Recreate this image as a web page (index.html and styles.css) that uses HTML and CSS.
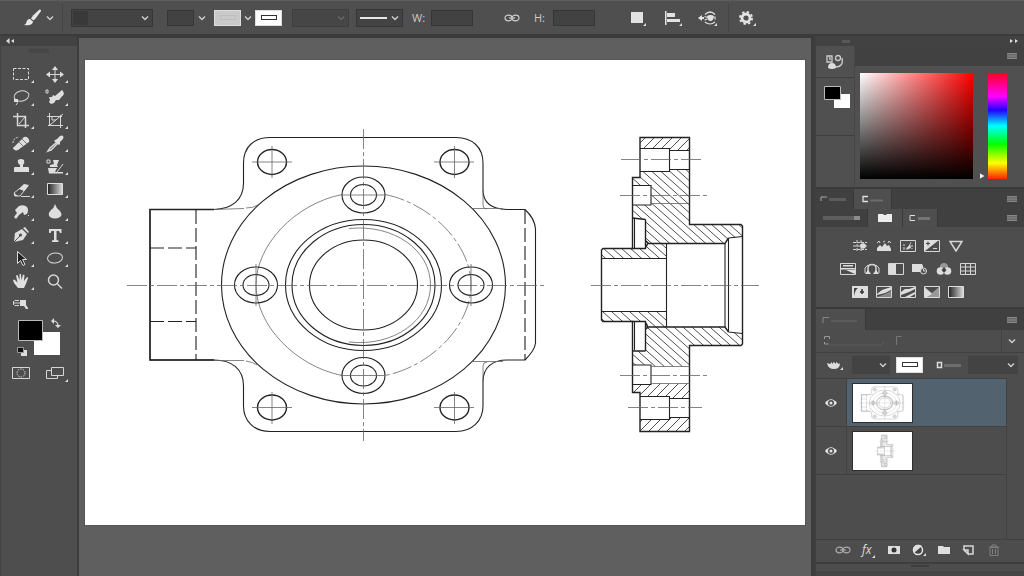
FILE: index.html
```html
<!DOCTYPE html>
<html lang="en">
<head>
    <meta charset="UTF-8">
    <meta name="viewport" content="width=device-width, initial-scale=1">
    <title>Image Editor</title>
    <link rel="stylesheet" href="styles.css">
</head>
<body>
    <!-- shared symbols -->
    <svg class="defs" width="0" height="0" aria-hidden="true">
        <symbol id="chev" viewBox="0 0 10 8"><path d="M2 2.500l3 3 3-3" fill="none" stroke="currentColor" stroke-width="1.500"/></symbol>
        <symbol id="menu" viewBox="0 0 10 8"><path d="M0 1h10v6H0z" fill="#686868"/><path d="M0 1.500h10M0 4h10M0 6.500h10" stroke="currentColor"/></symbol>
        <symbol id="link" viewBox="0 0 16 8"><g fill="none" stroke="currentColor" stroke-width="1.200"><ellipse cx="4.500" cy="4" rx="3.500" ry="2.800"/><ellipse cx="11.500" cy="4" rx="3.500" ry="2.800"/><path d="M5 4h6"/></g></symbol>
        <symbol id="eye" viewBox="0 0 14 10"><path d="M1 5q6-7.500 12 0-6 7.500-12 0z" fill="#e4e4e4"/><circle cx="7" cy="5" r="3" fill="#4b4b4b"/><circle cx="7" cy="5" r="1.500" fill="#e4e4e4"/></symbol>
        <pattern id="hatch-back" width="9" height="8" patternUnits="userSpaceOnUse"><path d="M-9-8l27 24M-9 0l18 16M0-8l18 16" stroke="#222" stroke-width=".8"/></pattern>
        <pattern id="hatch-fwd" width="9" height="9" patternUnits="userSpaceOnUse"><path d="M-3 12L12-3M-3 3l6-6M6 12l6-6" stroke="#222" stroke-width=".8"/></pattern>
    </svg>

    <header class="options">
        <div class="group">
            <button class="icon" aria-label="Brush tool">
                <svg width="20" height="20" viewBox="0 0 20 20"><path d="M19 2l-1.500-.5L11 7.500 9 10.500l2.500 2L14 10l5-7z" fill="#e6e6e6"/><path d="M8 11l3 2.500c0 3-4 4.500-9 3.500 3-1 2-3.500 3.500-5 .8-.8 1.600-1 2.500-1z" fill="#e6e6e6"/></svg>
            </button>
            <button class="icon" aria-label="Brush presets"><svg class="chev"><use href="#chev"/></svg></button>
        </div>
        <i class="sep"></i>
        <div class="drop drop--mode">
            <select aria-label="Mode"><option></option></select>
            <i class="drop__chip"></i>
            <svg class="chev"><use href="#chev"/></svg>
        </div>
        <div class="group group--fill">
            <button class="well" aria-label="Fill"></button>
            <svg class="chev"><use href="#chev"/></svg>
        </div>
        <div class="group group--stroke">
            <button class="well well--grey" aria-label="Stroke colour"><i></i></button>
            <svg class="chev"><use href="#chev"/></svg>
            <button class="well well--white" aria-label="Stroke style"><i></i></button>
        </div>
        <div class="drop drop--off">
            <select aria-label="Stroke width" disabled><option></option></select>
            <svg class="chev"><use href="#chev"/></svg>
        </div>
        <div class="drop drop--line">
            <select aria-label="Line type"><option></option></select>
            <i class="drop__line"></i>
            <svg class="chev"><use href="#chev"/></svg>
        </div>
        <div class="group group--size group--w">
            <label for="w">W:</label><input id="w" type="text">
        </div>
        <button class="icon link-wh" aria-label="Link width and height"><svg width="16" height="8"><use href="#link"/></svg></button>
        <div class="group group--size">
            <label for="h">H:</label><input id="h" type="text">
        </div>
        <div class="group group--actions">
            <button class="icon" aria-label="Path operations">
                <svg width="20" height="18" viewBox="0 0 20 18"><path d="M3 3h12v11H3zM18 14v3h-3z" fill="#e2e2e2"/></svg>
            </button>
            <button class="icon" aria-label="Path alignment">
                <svg width="20" height="18" viewBox="0 0 20 18"><path d="M2 2h1.500v14H2zM4 4h8v4H4zM4 10h13v3H4zM19 14v3h-3z" fill="#e2e2e2"/></svg>
            </button>
            <button class="icon" aria-label="Path arrangement">
                <svg width="20" height="18" viewBox="0 0 20 18"><g fill="none" stroke="#e2e2e2" stroke-width="1.200"><path d="M7 5.500q5-5 10 0M7 13q5 4 10 0M6.500 7.500l3 1M6.500 11l3-1M17 7.500v3"/></g><path d="M9 7q3.500-2 7 0-.5 5-3.500 5T9 7zM0 9l4-3v2h2v2H4v2zM19 14v3h-3z" fill="#e2e2e2"/></svg>
            </button>
        </div>
        <i class="sep"></i>
        <button class="icon" aria-label="Settings">
            <svg width="20" height="18" viewBox="0 0 20 18"><circle cx="9" cy="9" r="4" fill="none" stroke="#e2e2e2" stroke-width="2.800"/><circle cx="9" cy="9" r="6" fill="none" stroke="#e2e2e2" stroke-width="2" stroke-dasharray="2.400 2.312"/><path d="M19 14v3h-3z" fill="#e2e2e2"/></svg>
        </button>
    </header>

    <main class="workspace">
        <aside class="tools">
            <div class="tools__head"><svg width="8" height="6" viewBox="0 0 8 6"><path d="M3.500 0v6L0 3zM8 1v4L5 3z" fill="#ddd"/></svg></div>
            <div class="tools__grip"></div>
            <div class="tools__grid">
                <button aria-label="Marquee"><svg viewBox="0 0 34 23"><path d="M9.500 5.500h15v11h-15z" class="ln" stroke-dasharray="3 1.500"/><path class="corner" d="M30 17v3h-3z"/></svg></button>
                <button aria-label="Move"><svg viewBox="0 0 34 23"><path d="M17 5v13M10 11.500h14" class="ln"/><path class="fl" d="M17 3l3 4h-6zM17 20l3-4h-6zM8 11.500l4-3v6zM26 11.500l-4-3v6z"/><path class="corner" d="M30 17v3h-3z"/></svg></button>

                <button aria-label="Lasso"><svg viewBox="0 0 34 23"><ellipse cx="17.500" cy="10" rx="7.500" ry="5" transform="rotate(-12 17.500 10)" class="ln"/><path class="ln" d="M11 12.500q-2 2 1 2.500t0 4"/><path class="fl" d="M10 13h4v3h-4z"/><path class="corner" d="M30 17v3h-3z"/></svg></button>
                <button aria-label="Quick selection"><svg viewBox="0 0 34 23"><path class="fl" d="M25 5l-1-1-7 6-2-1-1 2-3 0 1 3-1 2 2 2 3-1 2-3 3 0 5-6z"/><path class="ln" d="M8 4h2v3H8zM24 9l1 1"/><path class="corner" d="M30 17v3h-3z"/></svg></button>

                <button aria-label="Crop"><svg viewBox="0 0 34 23"><path class="ln ln--b" d="M13.500 4v12.500H25M9 7.500h12.500V19"/><path class="ln" d="M15 15l6-7"/><path class="corner" d="M30 17v3h-3z"/></svg></button>
                <button aria-label="Slice"><svg viewBox="0 0 34 23"><path class="ln" d="M11.500 4v13M9 7.500h15M22.500 6v13M10 16.500h15M12 16L25 5M14 8v3h4"/><path class="corner" d="M30 17v3h-3z"/></svg></button>

                <button aria-label="Healing brush"><svg viewBox="0 0 34 23"><path class="fl" d="M10 15L20 5q2-1 4 1t1 4l-11 8q-2 1-4-0.500t0-2.500z"/><path d="M15 10l5 5M18 7l5 5" stroke="#4e4e4e" stroke-width=".7"/><path class="ln" d="M9 11q0-5 6-6" stroke-dasharray="2 1"/><path class="corner" d="M30 17v3h-3z"/></svg></button>
                <button aria-label="Eyedropper"><svg viewBox="0 0 34 23"><path class="ln ln--b" d="M19 10l-7 6-2 3 3-1 7-7"/><path class="fl" d="M17 8l2-1 3-3q2-1 3 0t0 3l-3 3 0 2-1 1-5-4z"/><path class="corner" d="M30 17v3h-3z"/></svg></button>

                <button aria-label="Clone stamp"><svg viewBox="0 0 34 23"><path class="fl" d="M14 5q3-2 6 0 1 3-1 5v2h5q1 0 1 1v4H10v-4q0-1 1-1h5v-2q-3-2-2-5z"/><path class="corner" d="M30 17v3h-3z"/></svg></button>
                <button aria-label="History brush"><svg viewBox="0 0 34 23"><path class="fl" d="M15 5h6l-2 5 1 2h-8v-2l4-1zM10 13h9l-2 4h8v1.500H11z"/><path class="ln" d="M9 5h3v3H9zM25 9l-6 8"/><path class="corner" d="M30 17v3h-3z"/></svg></button>

                <button aria-label="Eraser"><svg viewBox="0 0 34 23"><path class="ln" d="M10 15l10-8 4 1-8 10h-5zM17 18.500h9"/><path class="fl" d="M15 11l5-5 5 1-5 6zM10 15l4 3h-4z"/><path class="corner" d="M30 17v3h-3z"/></svg></button>
                <button aria-label="Gradient"><svg viewBox="0 0 34 23"><defs><linearGradient id="bw"><stop stop-color="#222"/><stop offset="1" stop-color="#ddd"/></linearGradient></defs><path d="M9.500 5.500h15v11h-15z" fill="url(#bw)" stroke="#ddd"/><path class="corner" d="M30 17v3h-3z"/></svg></button>

                <button aria-label="Smudge"><svg viewBox="0 0 34 23"><path class="fl" d="M10 16l3-4-2-3 4-4q5-2 8 1 2 3 0 7l-3 1-1-3-4 3-3 4z"/><path class="ln" d="M24 14l1 1"/><path class="corner" d="M30 17v3h-3z"/></svg></button>
                <button aria-label="Blur"><svg viewBox="0 0 34 23"><path class="fl" d="M17 3q1 4 5 7 3 4 0 6-5 3-10 0-3-3 1-7 3-2 4-6z"/><path class="corner" d="M30 17v3h-3z"/></svg></button>

                <button aria-label="Pen"><svg viewBox="0 0 34 23"><path class="fl" d="M10 18l1-9 7-4 5 5-4 6zM19 4l2-1 4 5-1 1z"/><path d="M10 18l6-6" stroke="#4e4e4e"/><circle cx="16.500" cy="11" r="1.600" fill="#4e4e4e"/><path class="corner" d="M30 17v3h-3z"/></svg></button>
                <button aria-label="Type"><svg viewBox="0 0 34 23"><path class="fl" d="M11 5h12.500v4H22l-1-2h-2.500v9l2 .5V18h-6.500v-1.500l2-.5V7h-2.500l-1 2H11z"/><path class="corner" d="M30 17v3h-3z"/></svg></button>

                <button aria-label="Path selection"><svg viewBox="0 0 34 23"><path d="M13.500 4.500v12l3-3 2.500 5 2-1-2.500-5h4z" fill="#222" stroke="#ddd"/><path class="corner" d="M30 17v3h-3z"/></svg></button>
                <button aria-label="Ellipse"><svg viewBox="0 0 34 23"><ellipse cx="17" cy="11" rx="7.500" ry="5" class="ln" transform="rotate(-8 17 11)"/><path class="corner" d="M30 17v3h-3z"/></svg></button>

                <button aria-label="Hand"><svg viewBox="0 0 34 23"><path class="fl" d="M14 18l-4-5-1-3 1.500-.5 3 3-1.500-7 1.500-.5 2 5V4H17l.5 6 1.500-5.500 1.500.5-.5 6 3-4 1.200.8-2.200 6L20 18z"/><path class="corner" d="M30 17v3h-3z"/></svg></button>
                <button aria-label="Zoom"><svg viewBox="0 0 34 23"><circle cx="15.500" cy="10" r="5" class="ln ln--b"/><path class="ln ln--b" d="M19 13.500l5 5"/></svg></button>

                <button aria-label="More tools"><svg viewBox="0 0 34 23"><path class="fl" d="M16 7h6v5l2 3v1h-2l-2-3-4 0z"/><path class="ln" d="M10.500 7.500H15M10.500 12.500H15M9.500 8v4M10 10h7"/></svg></button>
            </div>
            <button class="tools__colors" aria-label="Foreground and background colours">
                <svg width="56" height="44" viewBox="0 0 56 44"><path d="M22 16h26v23H22z" fill="#fff"/><path d="M6.500 4.500h24v20h-24z" fill="#000" stroke="#bbb"/><path d="M9 34h6v6H9z" fill="#ddd"/><path d="M5.500 31.500h6v5h-6z" fill="#111" stroke="#999"/><path d="M41 5q5 0 5 5" fill="none" stroke="#ddd" stroke-width="1.200"/><path d="M39 5l3-3v6zM46 12l-3-3h6z" fill="#ddd"/></svg>
            </button>
            <div class="tools__modes">
                <button aria-label="Quick mask"><svg viewBox="0 0 34 23"><path class="ln" d="M8.500 5.500h17v11h-17z"/><circle cx="17" cy="11" r="4" class="ln" stroke-dasharray="1.500 1"/></svg></button>
                <button aria-label="Screen mode"><svg viewBox="0 0 34 23"><path class="ln" d="M13.500 5.500h12v8h-12zM13 8.500H8.500v8h11V14"/><path class="corner" d="M30 17v3h-3z"/></svg></button>
            </div>
        </aside>

        <section class="canvas">
            <svg class="paper" viewBox="85 60 720 465" role="img" aria-label="Flange drawing, front view and section">
                <g id="front" class="draw">
                    <path d="M150 209.500H214C232 209 243.500 200 243.500 183V163C243.500 147 254 137.500 270 137.500H456C472 137.500 483 147 483 163V190C483 203 492 209 507 209.500H525C531 215 535 222 535.500 229V343C535 349 531 354 525 360H507C492 360 483 368 483 381V406C483 421 472 431.500 456 431.500H270C254 431.500 243.500 421 243.500 406V386C243.500 369 232 360 214 360H150z"/>
                    <path class="edge" d="M214 209.500H150V360H214"/>
                    <path class="dash" d="M196 210v150M150 248h46M150 321.500h46M525 210v150"/>
                    <path class="thin" d="M214 209.500l30-1M246 208q7 0 12-3M473 208.500h30M473 361.500h30M214 360.500h30M246 361q7 1 11 4M483 190v15q0 4 4 4M483 381v-15q0-4 4-4"/>
                    <ellipse cx="363.500" cy="285" rx="142" ry="119"/>
                    <path class="thin" d="M342 194.500C295 204 256 245 256 285C256 325 295 366 342 375.500"/>
                    <path class="thin axis" d="M385 194.500C432 204 471 245 471 285C471 325 432 366 385 375.500"/>
                    <ellipse cx="363.500" cy="285" rx="78" ry="65.500"/>
                    <ellipse cx="363.500" cy="285" rx="71.500" ry="60.500"/>
                    <path class="thin" d="M349 228.500C394 224 430.500 250 430.500 285S394 347 349 342"/>
                    <ellipse cx="363.500" cy="285" rx="54" ry="45"/>
                    <g>
                        <ellipse cx="363.500" cy="195" rx="21.500" ry="18"/><ellipse cx="363.500" cy="195" rx="13" ry="10.500"/>
                        <ellipse cx="363.500" cy="375.500" rx="21.500" ry="18"/><ellipse cx="363.500" cy="375.500" rx="13" ry="10.500"/>
                        <ellipse cx="256" cy="285" rx="21.500" ry="18"/><ellipse cx="256" cy="285" rx="13" ry="10.500"/>
                        <ellipse cx="471" cy="285" rx="21.500" ry="18"/><ellipse cx="471" cy="285" rx="13" ry="10.500"/>
                    </g>
                    <g class="bold">
                        <ellipse cx="272" cy="162" rx="14.500" ry="12.500"/>
                        <ellipse cx="454.500" cy="162" rx="14.500" ry="12.500"/>
                        <ellipse cx="272" cy="407.500" rx="14.500" ry="12.500"/>
                        <ellipse cx="454.500" cy="407.500" rx="14.500" ry="12.500"/>
                    </g>
                    <path class="thin" d="M252 162h40M272 146v32M434 162h40M454.500 146v32M252 407.500h40M272 392v32M434 407.500h40M454.500 392v32M342 195h43M342 375.500h43M256 264v42M471 264v42"/>
                    <path class="thin axis" d="M127 285.500H545M363.500 129V441"/>
                </g>
                <g id="side" class="draw">
                    <path class="hatch" fill="url(#hatch-fwd)" d="M640 137.500H689.500V150.500H669.500V148.500H640zM632.500 384.500H651V383.500H689.500V398.500H669.500V396.500H640V392.500H632.500zM640 419.500H669.500V417.500H689.500V431.500H640z"/>
                    <path class="hatch" fill="url(#hatch-back)" d="M640 171.500H669.500V169.500H689.500V224.500H742.500V236.500L728 238L725 243.500H666.500V258.500H601.500V248.500H645.500V219.500L632.500 217.500V205H651V185.500H632.500V177.500H640zM601.500 311.500H666.500V327H725L728 332L742.500 333.500V345.500H689.500V366.500H651V365H632.500V351H645.500V321.500H601.500z"/>
                    <path class="bold" d="M640 137.500H689.500V224.500H741L742.500 226V344L741 345.500H689.500V431.500H640V392.500H632.500V321.500H603L601.500 320V250L603 248.500H632.500V177.500H640z"/>
                    <path d="M640 148.500H669.500V171.500H640M669.500 150.500H689.500M669.500 169.500H689.500M632.500 185.500H651V205H632.500M632.500 365H651V384.500H632.500M640 396.500H669.500V419.500H640M669.500 398.500H689.500M669.500 417.500H689.500"/>
                    <path class="bold" d="M648 243.500H725L728.500 238M648 327H725L728.500 332M645.500 219.500V248.500H632M645.500 351V321.500H632M632.500 218L645.500 219.500M632.500 351H645.500M646 241l2 2-2 4M646 329l2-2-2-4"/>
                    <path d="M634.500 219V248M634.500 322V350M666.500 243.500V327M725 243.500V327M728.500 238V332M728.500 238L742.500 236.500M728.500 332L742.500 333.500M601.500 258.500H666.500M601.500 311.500H666.500"/>
                    <path class="thin" d="M651 203.500H689.500M651 366.500H689.500M651 383.500H689.500"/>
                    <path class="thin axis" d="M621 159.500H704M620 195.500H708M620 375.500H708M628 407.500H702M591 285.500H759"/>
                </g>
            </svg>
        </section>

        <aside class="panels">
            <div class="strip"><i></i><svg width="8" height="6" viewBox="0 0 8 6"><path d="M0 1v4l3-2zM5 1v4l3-2z" fill="#ddd"/></svg></div>

            <section class="color">
                <div class="color__side">
                    <button class="color__tab" aria-label="History">
                        <svg width="20" height="18" viewBox="0 0 20 18"><g fill="none" stroke="#ccc" stroke-width="1.300"><path d="M2 3h5v6H2zM4 5h1v2"/><circle cx="13" cy="5" r="2.500"/><path d="M17 5q2 9-7 9"/></g><path d="M3 15q0-5 4-5t4 5q-4 2-8 0z" fill="#ddd"/></svg>
                    </button>
                    <button class="color__wells" aria-label="Colour swatches">
                        <svg width="28" height="24" viewBox="0 0 28 24"><path d="M11 9h16v14H11z" fill="#fff"/><path d="M1.500 1.500h16v13h-16z" fill="#000" stroke="#bbb"/></svg>
                    </button>
                </div>
                <div class="color__main">
                    <div class="color__head"><svg class="menu"><use href="#menu"/></svg></div>
                    <div class="color__pick">
                        <div class="field"></div>
                        <input class="hue" type="range" min="0" max="360" value="0" aria-label="Hue">
                    </div>
                </div>
            </section>

            <div class="tabs tabs--top">
                <button aria-label="Properties"><svg width="30" height="8" viewBox="0 0 30 8"><path d="M1 6V2h6" fill="none" stroke="#aaa"/><path d="M9 4.500h17" stroke="#5c5c5c" stroke-width="3"/></svg></button>
                <button class="active" aria-label="Character"><svg width="24" height="8" viewBox="0 0 24 8"><path d="M7 1.500H2v5h5" fill="none" stroke="#e0e0e0" stroke-width="1.300"/><path d="M9 5.500h13" stroke="#6c6c6c" stroke-width="2"/></svg></button>
                <svg class="menu"><use href="#menu"/></svg>
            </div>
            <div class="tabs tabs--low">
                <button class="wide" aria-label="Libraries"><svg width="38" height="8" viewBox="0 0 38 8"><path d="M0 4h31" stroke="#5d5d5d" stroke-width="4"/><path d="M31 4h6" stroke="#8b8b8b" stroke-width="4"/></svg></button>
                <button class="active" aria-label="Adjustments"><svg width="16" height="10" viewBox="0 0 16 10"><path d="M1 1h5l1 1h2l1-1h5v8H1z" fill="#ededed"/></svg></button>
                <button class="active" aria-label="Styles"><svg width="24" height="8" viewBox="0 0 24 8"><path d="M7 1.500H2v5h5" fill="none" stroke="#ddd"/><path d="M10 4.500h12" stroke="#747474" stroke-width="3"/></svg></button>
                <svg class="menu"><use href="#menu"/></svg>
            </div>

            <section class="adjust">
                <div>
                    <button aria-label="Brightness"><svg viewBox="0 0 16 12"><path d="M1 2.500h14M1 6h14M1 9.500h14M5 0v12M9 0v12" class="ln" stroke-dasharray="3 1"/><circle cx="11" cy="6" r="2.800" class="fl"/></svg></button>
                    <button aria-label="Levels"><svg viewBox="0 0 16 12"><path class="fl" d="M1 11V8l3-3 2 2 3-4 2 3 2-1 2 4v2z"/><path class="ln" d="M1 3l2-2 1 2M7 2l2-1M12 3l1-2 2 2"/></svg></button>
                    <button aria-label="Curves"><svg viewBox="0 0 16 12"><path class="ln" d="M.5.5h15v11H.5z"/><path class="ln" d="M3 9q6 0 8-7M4 4v4M12 5v4" stroke-dasharray="2 1"/><path class="fl" d="M6 10l4-6 1 4z"/></svg></button>
                    <button aria-label="Exposure"><svg viewBox="0 0 16 12"><path class="ln" d="M.5.5h15v11H.5z"/><path class="fl" d="M0 0h15L1 11H0z"/><path d="M2 3.500h4M4 1.500v4" stroke="#444"/><path class="ln" d="M9 8.500h4"/></svg></button>
                    <button aria-label="Vibrance"><svg viewBox="0 0 16 12"><path class="ln ln--b" d="M2 1.500h12L8 11z"/></svg></button>
                </div>
                <div>
                    <button aria-label="Hue and saturation"><svg viewBox="0 0 16 12"><path class="ln" d="M.5.5h15v11H.5z"/><path class="fl" d="M1 5h14v1.500H1zM3 2h10v1.500H3zM6 7l9 0v4z"/></svg></button>
                    <button aria-label="Color balance"><svg viewBox="0 0 16 12"><path class="ln ln--b" d="M4 9V5q0-3.500 4-3.500T12 5v4"/><path class="ln" d="M1 10V5l3-3M15 10V5l-3-3"/><path class="fl" d="M1 11l3-4 3 4zM9 11l3-4 3 4z"/></svg></button>
                    <button aria-label="Black and white"><svg viewBox="0 0 16 12"><path class="ln" d="M.5.5h15v11H.5z"/><path class="fl" d="M1 1h7v10H1z"/></svg></button>
                    <button aria-label="Photo filter"><svg viewBox="0 0 16 12"><path class="fl" d="M0 1h10l1 2v6H0z"/><circle cx="11.500" cy="8" r="3" fill="#4e4e4e" stroke="#ddd"/><path class="ln" d="M11.500 6v2h2"/></svg></button>
                    <button aria-label="Channel mixer"><svg viewBox="0 0 16 12"><circle cx="8" cy="4" r="4" fill="#999"/><circle cx="4.500" cy="8" r="3.800" class="fl"/><circle cx="11.500" cy="8" r="3.800" class="fl"/><path d="M8 4l2.500 3L8 10 5.500 7z" fill="#444"/></svg></button>
                    <button aria-label="Color lookup"><svg viewBox="0 0 16 12"><path class="ln" d="M.5.500h15v11H.5zM5.500 0v12M10.500 0v12M0 4h16M0 8h16"/></svg></button>
                </div>
                <div>
                    <button aria-label="Invert"><svg viewBox="0 0 16 12"><path class="fl" d="M0 0h16v12H0z"/><path d="M2 10V2h4q-3 2-4 8zM7 2v3" fill="#444"/><path d="M10 3v5M8 6h4" stroke="#333" stroke-width="1.500"/></svg></button>
                    <button aria-label="Posterize"><svg viewBox="0 0 16 12"><path class="ln" d="M.5.5h15v11H.5z"/><path class="fl" d="M1 8l5-4 9-3v3L9 7 1 9z"/><path d="M1 11l8-3 6-3v6z" fill="#888"/></svg></button>
                    <button aria-label="Threshold"><svg viewBox="0 0 16 12"><path class="ln" d="M.5.5h15v11H.5z"/><path class="fl" d="M1 6l4-3 4 0 6-2v2L9 6 1 9zM5 11l10-5v2l-5 3z"/></svg></button>
                    <button aria-label="Selective color"><svg viewBox="0 0 16 12"><path d="M.5.5h15v11H.5z" fill="#999" stroke="#ddd"/><path d="M1 1l7 6 7-6z" fill="#4a4a4a"/><path class="fl" d="M1 2l7 6-5 3H1z"/></svg></button>
                    <button aria-label="Gradient map"><svg viewBox="0 0 16 12"><path d="M.5.5h15v11H.5z" fill="url(#bw)" stroke="#ddd"/></svg></button>
                </div>
            </section>

            <div class="tabs tabs--layers">
                <button class="active" aria-label="Layers"><svg width="38" height="8" viewBox="0 0 38 8"><path d="M1 7V1.500h6" fill="none" stroke="#888"/><path d="M9 5h26" stroke="#5b5b5b" stroke-width="2"/></svg></button>
                <svg class="menu"><use href="#menu"/></svg>
            </div>
            <div class="filter">
                <svg width="62" height="12" viewBox="0 0 62 12"><path d="M1.500 4V1.500h5V4M1.500 7v2h4" fill="none" stroke="#999"/><path d="M8 10h52M60 9v-2" stroke="#5f5f5f"/></svg>
                <svg width="62" height="12" viewBox="0 0 62 12"><path d="M1.500 10V1.500h5" fill="none" stroke="#777"/></svg>
                <button aria-label="Filter options"><svg class="chev"><use href="#chev"/></svg></button>
            </div>
            <div class="blend">
                <button class="icon" aria-label="Lock"><svg width="16" height="12" viewBox="0 0 16 12"><path d="M0 4l3 1 2-2v2l2-2 2 2V3l3 2 1-1q0 6-6 6T0 4zM16 8v3h-3z" fill="#ddd"/></svg></button>
                <div class="drop drop--blend">
                    <select aria-label="Blend mode"><option></option></select>
                    <svg class="chev"><use href="#chev"/></svg>
                </div>
                <button class="well well--white" aria-label="Fill pattern"><i></i></button>
                <svg class="blend__mark" width="26" height="8" viewBox="0 0 26 8"><path d="M1.500 1.500h4v5h-4z" fill="none" stroke="#ddd" stroke-width="1.500"/><path d="M8 4.500h17" stroke="#6e6e6e" stroke-width="3"/></svg>
                <div class="drop drop--opacity">
                    <select aria-label="Opacity"><option></option></select>
                    <svg class="chev"><use href="#chev"/></svg>
                </div>
            </div>

            <div class="layers">
                <div class="layer layer--on">
                    <button aria-label="Toggle front view"><svg width="14" height="10"><use href="#eye"/></svg></button>
                    <div class="layer__body"><svg class="thumb" viewBox="73 115 540 340"><use href="#front"/></svg></div>
                </div>
                <div class="layer">
                    <button aria-label="Toggle section view"><svg width="14" height="10"><use href="#eye"/></svg></button>
                    <div class="layer__body"><svg class="thumb" viewBox="378 115 540 340"><use href="#side"/></svg></div>
                </div>
            </div>

            <footer class="actions">
                <button class="icon" aria-label="Link layers"><svg width="16" height="8" viewBox="0 0 16 8" color="#aaa"><use href="#link"/></svg></button>
                <button class="icon fx" aria-label="Layer effects">fx<svg width="3" height="3" viewBox="0 0 3 3"><path class="corner" d="M3 0v3H0z"/></svg></button>
                <button class="icon" aria-label="Add mask"><svg width="14" height="12" viewBox="0 0 14 12"><path class="fl" d="M1 2h12v8H1z"/><circle cx="7" cy="6" r="2.500" fill="#333"/></svg></button>
                <button class="icon" aria-label="Adjustment layer"><svg width="14" height="12" viewBox="0 0 14 12"><circle cx="6" cy="6" r="4.500" fill="#444" stroke="#e4e4e4" stroke-width="1.500"/><path class="fl" d="M10 2L2 9Q-1 4 4 1q4-1 6 1zM14 9v3h-3z"/></svg></button>
                <button class="icon" aria-label="New group"><svg width="14" height="12" viewBox="0 0 14 12"><path class="fl" d="M1 2h5l1 1h6v7H1z"/></svg></button>
                <button class="icon" aria-label="New layer"><svg width="14" height="12" viewBox="0 0 14 12"><path class="ln ln--b" d="M2 6V2h9v8H7zM2 6h4v4z"/></svg></button>
                <button class="icon" aria-label="Delete layer"><svg width="14" height="12" viewBox="0 0 14 12"><path d="M3 3.500h8v8H3zM2 3h10M5 3V1h4v2M5.500 5v5M8.500 5v5" fill="none" stroke="#808080"/></svg></button>
            </footer>
            <div class="dock"><i></i></div>
        </aside>
    </main>
</body>
</html>
```
FILE: styles.css
```css
* { box-sizing: border-box; }

body {
    margin: 0;
    min-height: 100vh;
    display: flex;
    flex-direction: column;
    background: #3c3c3c;
    color: #ccc;
    font-family: "Open Sans", Arial, sans-serif;
    font-size: 11px;
}

button, input, select {
    margin: 0;
    padding: 0;
    border: 0;
    background: none;
    color: inherit;
    font: inherit;
}

svg { display: block; flex: none; }
.defs { position: absolute; }

.ln { fill: none; stroke: #d6d6d6; stroke-width: 1; }
.ln--b { stroke-width: 1.5px; }
.fl, .corner { fill: #dedede; }
.chev { width: 10px; height: 8px; color: #ccc; }
.menu { width: 10px; height: 8px; color: #888; }

/* options bar */
.options {
    display: flex;
    align-items: center;
    gap: 7px;
    height: 36px;
    padding-left: 22px;
    background: #4f4f4f;
    border-top: 1px solid #5c5c5c;
    border-bottom: 2px solid #3b3b3b;
}

.group { display: flex; align-items: center; gap: 3px; }
.group--fill { margin-left: 7px; }
.group--stroke { gap: 2px; }
.group--size { gap: 5px; }
.group--size label { width: 14px; }
.group--size input { width: 42px; height: 16px; background: #424242; border: 1px solid #353535; }
.group--w { margin-left: 2px; }
.group--actions { gap: 15px; margin: 0 3px 0 26px; }
.link-wh { margin: 0 7px 0 24px; }
.sep { width: 1px; height: 30px; background: #464646; margin-right: 1px; }

.well { width: 27px; height: 16px; background: #424242; border: 1px solid #353535; display: grid; place-items: center; }
.well i { width: 16px; height: 5px; border: 1px solid #bdbdbd; }
.well--grey { background: #c9c9c9; border-color: #ddd; }
.well--white { background: #fff; border-color: #ddd; }
.well--white i { border-color: #333; }

.drop { display: grid; align-items: center; height: 18px; background: #434343; border: 1px solid #363636; }
.drop > * { grid-area: 1 / 1; }
.drop select { width: 100%; height: 100%; appearance: none; }
.drop .chev { justify-self: end; margin-right: 2px; pointer-events: none; }
.drop--mode { width: 82px; }
.drop__chip { width: 15px; height: 14px; margin-left: 1px; background: #393939; pointer-events: none; }
.drop--off { width: 57px; margin-left: 3px; background: #464646; border-color: #3e3e3e; }
.drop--off .chev { color: #666; }
.drop--line { width: 47px; }
.drop__line { width: 27px; height: 2px; margin-left: 3px; background: #e8e8e8; pointer-events: none; }

/* main area */
.workspace { flex: 1; display: flex; }

.tools { width: 77px; background: #4e4e4e; border-left: 1px solid #434343; }
.tools__head { height: 10px; padding: 2px 5px; background: #424242; }
.tools__grip { width: 20px; height: 4px; margin: 3px auto 10px 28px; background: #464646; }
.tools__grid, .tools__modes {
    display: grid;
    grid-template-columns: 34px 34px;
    grid-auto-rows: 23px;
    padding-left: 3px;
}
.tools__colors { display: block; margin: 0 0 2px 11px; }

.canvas { flex: 1; padding: 22px 6px 24px; margin: 2px 4px 0 2px; background: #5f5f5f; }
.paper { width: 100%; background: #fff; box-shadow: 0 0 0 1px #555; }

/* technical drawing */
.draw { fill: none; stroke: #222; stroke-width: var(--line, 1.1); }
.draw .bold, .draw .edge { stroke-width: var(--line, 1.4); }
.draw .thin { stroke: #666; stroke-width: var(--line, 0.8); }
.draw .dash { stroke-dasharray: 14 4; }
.draw .axis { stroke-dasharray: 20 3 4 3; }
.draw .hatch { stroke: none; }

/* right side */
.panels { width: 209px; display: flex; flex-direction: column; background: #4d4d4d; border-left: 1px solid #404040; }
.strip { display: flex; align-items: center; justify-content: space-between; height: 10px; padding: 0 6px 0 26px; background: #424242; }
.strip i { width: 8px; height: 3px; background: #575757; }

.color { display: flex; height: 141px; background: #505050; }
.color__side { width: 39px; display: flex; flex-direction: column; border-right: 1px solid #474747; }
.color__tab { height: 32px; display: grid; place-items: center; border-bottom: 1px solid #404040; }
.color__wells { display: flex; align-items: flex-start; height: 58px; padding: 7px; border-bottom: 1px solid #404040; }
.color__main { flex: 1; }
.color__head { display: flex; justify-content: flex-end; align-items: center; height: 20px; padding-right: 7px; background: #414141; }
.color__pick { display: flex; padding: 7px 17px 0 5px; }
.field {
    flex: 1;
    height: 106px;
    background: linear-gradient(to top, #000, transparent), linear-gradient(to right, #fff, #f00);
}
.hue {
    appearance: none;
    writing-mode: vertical-lr;
    direction: rtl;
    width: 26px;
    height: 106px;
    margin-left: 8px;
    padding-left: 7px;
    background: linear-gradient(#f02, #f0f 22%, #20f 35%, #0ff 50%, #0f0 67%, #ff0 85%, #f20) content-box;
}
.hue::-webkit-slider-thumb { appearance: none; width: 5px; height: 6px; margin-left: -18px; background: #eee; clip-path: polygon(0 0, 100% 50%, 0 100%); }

.tabs { display: flex; align-items: stretch; background: #404040; padding-right: 7px; }
.tabs button { display: grid; place-items: center; width: 38px; border-right: 1px solid #393939; }
.tabs .active { background: #4e4e4e; }
.tabs .menu { margin-left: auto; align-self: center; }
.tabs--top { height: 22px; border-top: 2px solid #3a3a3a; }
.tabs--low { height: 18px; }
.tabs--low button { width: 35px; }
.tabs--low .wide { width: 52px; }

.adjust { display: flex; flex-direction: column; gap: 11px; padding: 13px 50px 9px 26px; }
.adjust div { display: flex; justify-content: center; gap: 8px; }
.adjust button { width: 16px; height: 12px; }
.adjust svg { width: 16px; height: 12px; }

.tabs--layers { height: 23px; border-top: 2px solid #3a3a3a; }
.tabs--layers .active { width: 50px; }

.filter { display: flex; align-items: center; gap: 10px; height: 23px; padding-left: 7px; border-bottom: 1px solid #414141; }
.filter button { display: grid; place-items: center; width: 20px; height: 22px; margin: 0 3px 0 auto; border-left: 1px solid #414141; }

.blend { display: flex; align-items: center; gap: 6px; height: 25px; padding: 0 6px 2px 11px; }
.blend .icon { margin-right: 3px; }
.blend .drop { border: 0; }
.drop--blend { width: 38px; }
.blend__mark { margin-left: 7px; }
.drop--opacity { flex: 1; }

.layers { flex: 1; margin-right: 17px; border-top: 1px solid #404040; border-right: 1px solid #414141; }
.layer { display: flex; height: 48px; border-bottom: 1px solid #414141; }
.layer button { display: grid; place-items: center; width: 31px; border-right: 1px solid #414141; }
.layer__body { flex: 1; padding: 4px 5px; }
.layer--on .layer__body { background: #53626f; }
.thumb { --line: 1.6; width: 61px; height: 40px; background: #fff; border: 1px solid #2e2e2e; }

.actions { display: flex; align-items: center; gap: 11px; height: 23px; padding: 0 0 2px 19px; border-top: 1px solid #414141; }
.fx { display: flex; align-items: flex-end; width: 14px; font-size: 12px; line-height: 16px; font-style: italic; color: #ddd; }
.dock { height: 14px; border-top: 2px solid #3d3d3d; border-bottom: 5px solid #454545; }
.dock i { display: block; width: 18px; height: 2px; margin: 1px auto; background: #3d3d3d; }
```
